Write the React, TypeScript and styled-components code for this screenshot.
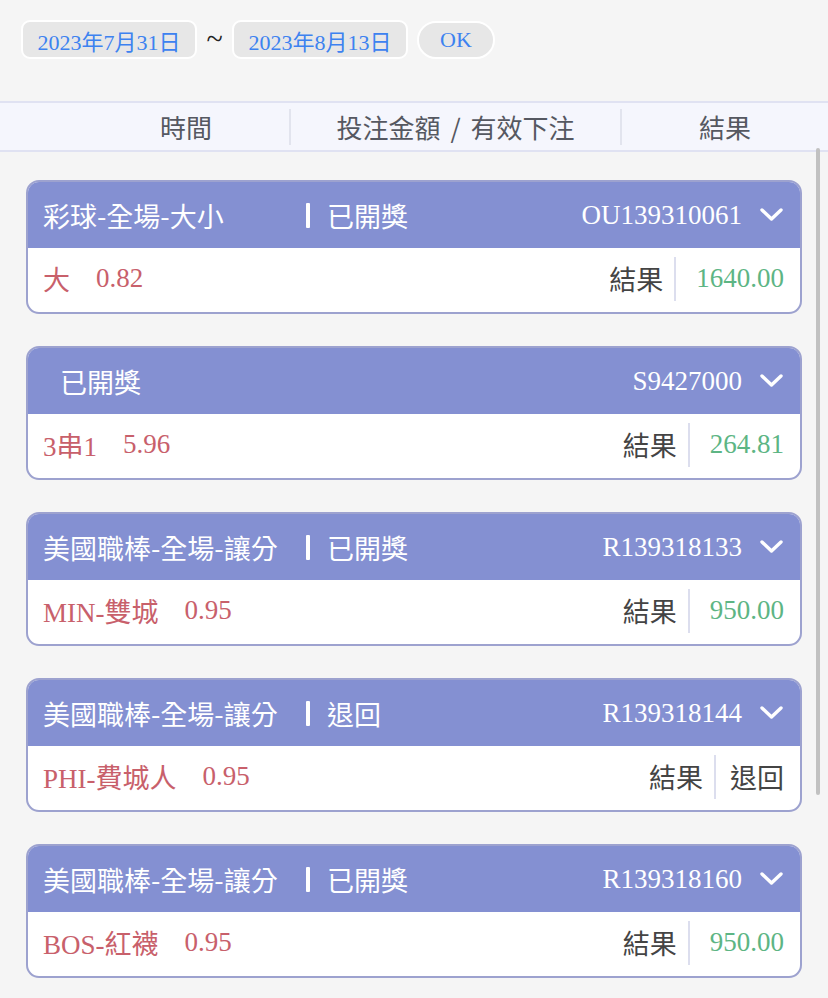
import React from 'react';
import styled, { createGlobalStyle } from 'styled-components';

const GlobalStyle = createGlobalStyle`
  html, body {
    margin: 0;
    padding: 0;
    background-color: #f5f5f5;
    font-family: "Liberation Serif", "Noto Sans CJK TC", serif;
  }
`;

const Page = styled.div`
  min-height: 998px;
  background-color: #f5f5f5;
  padding-top: 20px;
  box-sizing: border-box;
`;

const DateRow = styled.div`
  display: flex;
  align-items: center;
  padding-left: 21px;
  height: 39px;
`;

const DateButton = styled.button`
  height: 39px;
  width: 176px;
  box-sizing: border-box;
  border: 2px solid #ffffff;
  border-radius: 9px;
  background-color: #e7e7e7;
  color: #3d82f0;
  font-family: "Liberation Serif", "Noto Sans CJK TC", serif;
  font-size: 22px;
  padding: 0;
  display: flex;
  align-items: center;
  justify-content: center;
`;

const Tilde = styled.span`
  width: 35px;
  text-align: center;
  font-size: 30px;
  color: #222;
  font-family: "Liberation Serif", serif;
  line-height: 1;
  margin-top: -2px;
`;

const OkButton = styled.button`
  margin-left: 9px;
  margin-top: 1px;
  height: 38px;
  width: 78px;
  box-sizing: border-box;
  border: 2px solid #ffffff;
  border-radius: 19px;
  background-color: #e7e7e7;
  color: #3d82f0;
  font-family: "Liberation Serif", serif;
  font-size: 22px;
  padding: 0;
`;

const ColumnHeader = styled.div`
  margin-top: 42px;
  height: 51px;
  box-sizing: border-box;
  border-top: 2px solid #e0e2f2;
  border-bottom: 2px solid #e0e2f2;
  background-color: #f5f6fd;
  display: grid;
  grid-template-columns: 206px 331px 1fr;
  padding-left: 83px;
  align-items: center;
`;

const ColumnTitle = styled.div<{ $divider?: boolean }>`
  text-align: center;
  font-family: "Noto Sans CJK TC", sans-serif;
  font-size: 26px;
  word-spacing: 4px;
  color: #555861;
  height: 36px;
  line-height: 36px;
  border-left: ${(p) => (p.$divider ? '2px solid #e2e4ee' : 'none')};
`;

const List = styled.div`
  display: flex;
  flex-direction: column;
  gap: 32px;
  padding: 28px 26px 20px;
`;

const Card = styled.div`
  border: 2px solid #9da2cf;
  border-radius: 13px;
  overflow: hidden;
  background-color: #ffffff;
`;

const CardHeader = styled.div`
  height: 66px;
  background-color: #8490d2;
  display: flex;
  align-items: center;
  padding: 0 16px 0 15px;
  color: #ffffff;
  font-size: 27px;
`;

const GameTitle = styled.span`
  width: 262px;
  font-family: "Noto Sans CJK TC", sans-serif;
  white-space: nowrap;
`;

const Status = styled.span<{ $bar: boolean }>`
  font-family: "Noto Sans CJK TC", sans-serif;
  display: flex;
  align-items: center;
  margin-left: ${(p) => (p.$bar ? '0' : '17px')};
`;

const StatusBar = styled.span`
  width: 4px;
  height: 25px;
  background-color: #ffffff;
  border-radius: 1px;
  margin: 0 17px 0 1px;
`;

const TicketId = styled.span`
  margin-left: auto;
  font-family: "Liberation Serif", serif;
`;

const Chevron = styled.svg`
  width: 25px;
  height: 16px;
  margin-left: 17px;
`;

const CardBody = styled.div`
  height: 64px;
  box-sizing: border-box;
  display: flex;
  align-items: center;
  padding: 0 16px 3px 15px;
  font-size: 27px;
`;

const Pick = styled.span`
  color: #c8606b;
  font-family: "Liberation Serif", "Noto Sans CJK TC", serif;
`;

const Odds = styled.span`
  color: #c8606b;
  margin-left: 26px;
  font-family: "Liberation Serif", serif;
`;

const ResultLabel = styled.span`
  margin-left: auto;
  color: #444444;
  font-family: "Noto Sans CJK TC", sans-serif;
  padding-right: 11px;
  border-right: 2px solid #dcdeee;
  height: 44px;
  line-height: 44px;
`;

const ResultValue = styled.span<{ $win: boolean }>`
  padding-left: ${(p) => (p.$win ? '20px' : '14px')};
  color: ${(p) => (p.$win ? '#5db584' : '#444444')};
  font-family: ${(p) => (p.$win ? '"Liberation Serif", serif' : '"Noto Sans CJK TC", sans-serif')};
`;

const ScrollThumb = styled.div`
  position: fixed;
  right: 8px;
  top: 148px;
  width: 4px;
  height: 647px;
  border-radius: 2px;
  background-color: #c1c1c1;
`;

interface Bet {
  id: string;
  game: string;
  status: string;
  pick: string;
  odds: string;
  result: string;
  win: boolean;
}

const bets: Bet[] = [
  { id: 'OU139310061', game: '彩球-全場-大小', status: '已開獎', pick: '大', odds: '0.82', result: '1640.00', win: true },
  { id: 'S9427000', game: '', status: '已開獎', pick: '3串1', odds: '5.96', result: '264.81', win: true },
  { id: 'R139318133', game: '美國職棒-全場-讓分', status: '已開獎', pick: 'MIN-雙城', odds: '0.95', result: '950.00', win: true },
  { id: 'R139318144', game: '美國職棒-全場-讓分', status: '退回', pick: 'PHI-費城人', odds: '0.95', result: '退回', win: false },
  { id: 'R139318160', game: '美國職棒-全場-讓分', status: '已開獎', pick: 'BOS-紅襪', odds: '0.95', result: '950.00', win: true },
];

const App: React.FC = () => {
  return (
    <Page>
      <GlobalStyle />
      <DateRow>
        <DateButton>2023年7月31日</DateButton>
        <Tilde>~</Tilde>
        <DateButton>2023年8月13日</DateButton>
        <OkButton>OK</OkButton>
      </DateRow>

      <ColumnHeader>
        <ColumnTitle>時間</ColumnTitle>
        <ColumnTitle $divider>投注金額 / 有效下注</ColumnTitle>
        <ColumnTitle $divider>結果</ColumnTitle>
      </ColumnHeader>

      <List>
        {bets.map((bet) => (
          <Card key={bet.id}>
            <CardHeader>
              {bet.game && <GameTitle>{bet.game}</GameTitle>}
              <Status $bar={!!bet.game}>
                {bet.game && <StatusBar />}
                {bet.status}
              </Status>
              <TicketId>{bet.id}</TicketId>
              <Chevron viewBox="0 0 25 16">
                <polyline
                  points="3,3 12.5,12 22,3"
                  fill="none"
                  stroke="#ffffff"
                  strokeWidth="3.4"
                  strokeLinecap="round"
                  strokeLinejoin="round"
                />
              </Chevron>
            </CardHeader>
            <CardBody>
              <Pick>{bet.pick}</Pick>
              <Odds>{bet.odds}</Odds>
              <ResultLabel>結果</ResultLabel>
              <ResultValue $win={bet.win}>{bet.result}</ResultValue>
            </CardBody>
          </Card>
        ))}
      </List>

      <ScrollThumb />
    </Page>
  );
};

export default App;
